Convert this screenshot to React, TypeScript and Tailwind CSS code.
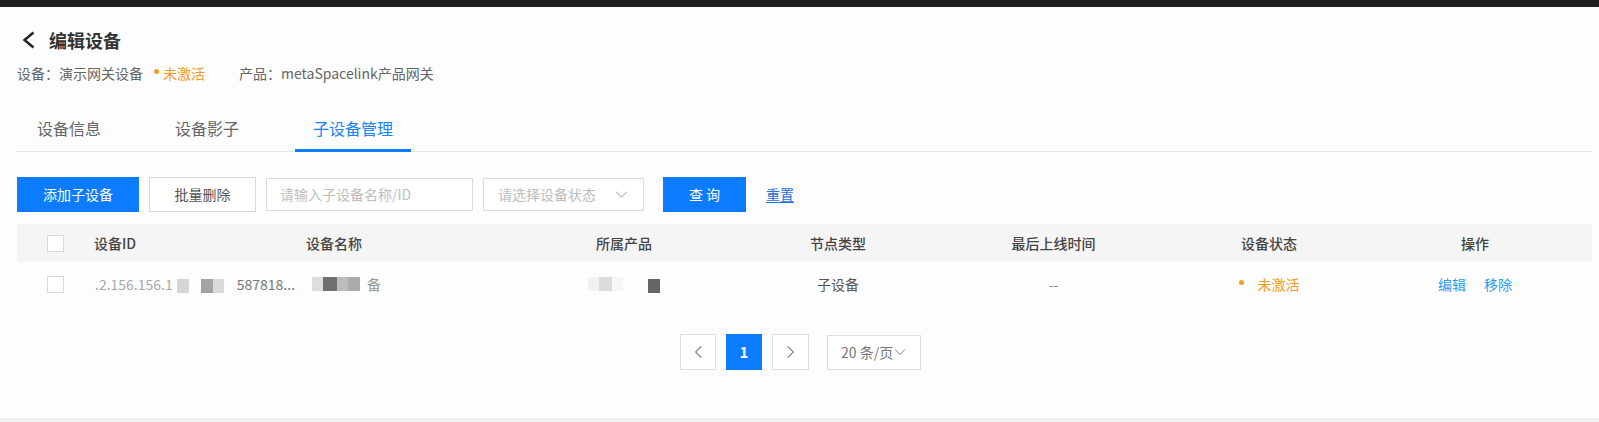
import React from "react";

const FONT = { fontFamily: '"Noto Sans CJK SC", "Noto Sans", sans-serif' };

const TABS = ["设备信息", "设备影子", "子设备管理"];

// column template shared by header and rows
const COLS = "grid grid-cols-[60px_213px_290px_150px_216px_215px_216px_196px_1fr]";

function Chevron({ dir, className }: { dir: "left" | "right" | "down"; className?: string }) {
  const d =
    dir === "left" ? "M9 1 L2 8 L9 15" : dir === "right" ? "M2 1 L9 8 L2 15" : "M1 2 L7 8 L13 2";
  const box = dir === "down" ? "0 0 14 10" : "0 0 11 16";
  return (
    <svg viewBox={box} className={className} fill="none" stroke="currentColor" strokeWidth="1.4">
      <path d={d} />
    </svg>
  );
}

function Checkbox() {
  return <span className="block w-[17px] h-[17px] border border-[#d9d9d9] bg-white" />;
}

function Blot({ w, c }: { w: number; c: string }) {
  return <span className="inline-block h-[14px] align-middle" style={{ width: w, background: c }} />;
}

export default function App() {
  return (
    <div className="min-h-screen bg-[#efefef] text-[#333]" style={FONT}>
      <div className="h-[7px] bg-[#1e1e1e]" />
      <div className="h-[411px] bg-[#fdfdfd] pl-[17px] pr-[7px]">
        {/* Title */}
        <div className="flex items-center pt-[21px] h-[45px]">
          <svg viewBox="0 0 14 18" className="w-[15px] h-[18px] ml-[4px] text-[#222]" fill="none" stroke="currentColor" strokeWidth="2.4">
            <path d="M12 1.5 L3 9 L12 16.5" />
          </svg>
          <h1 className="ml-[13px] text-[18px] font-bold leading-[24px] text-[#333]">编辑设备</h1>
        </div>

        <div className="mt-[11px] flex items-center h-[20px] text-[14px] leading-[20px] text-[#666]">
          <span>设备：演示网关设备</span>
          <span className="ml-[11px] w-[5px] h-[5px] rounded-full bg-[#f59a23] -mt-[3px]" />
          <span className="ml-[4px] text-[#f59a23]">未激活</span>
          <span className="ml-[34px]">产品：metaSpacelink产品网关</span>
        </div>

        {/* Tabs */}
        <div className="mt-[22px] flex gap-[38px] border-b border-[#e6e6e6] pl-[2px]">
          {TABS.map((t, i) => (
            <div
              key={t}
              className={`relative h-[46px] px-[18px] flex items-center text-[16px] ${
                i === 2 ? "text-[#1a82f8]" : "text-[#666]"
              }`}
            >
              {t}
              {i === 2 && <span className="absolute left-0 right-0 bottom-[-1px] h-[3px] bg-[#0b7cff]" />}
            </div>
          ))}
        </div>

        {/* Toolbar */}
        <div className="mt-[25px] flex items-center h-[35px] text-[14px]">
          <button className="w-[122px] h-[35px] bg-[#0b7cff] text-white">添加子设备</button>
          <button className="ml-[10px] w-[107px] h-[35px] border border-[#d9d9d9] bg-white text-[#555]">批量删除</button>
          <div className="ml-[10px] w-[207px] h-[33px] border border-[#dcdcdc] bg-white flex items-center pl-[13px] text-[#bdbdbd]">
            请输入子设备名称/ID
          </div>
          <div className="ml-[10px] w-[161px] h-[33px] border border-[#dcdcdc] bg-white flex items-center justify-between pl-[14px] pr-[15px] text-[#bdbdbd]">
            <span>请选择设备状态</span>
            <Chevron dir="down" className="w-[13px] h-[9px] text-[#c4c4c4]" />
          </div>
          <button className="ml-[19px] w-[83px] h-[35px] bg-[#0b7cff] text-white">查 询</button>
          <a className="ml-[20px] text-[#1f6fe0] underline underline-offset-2">重置</a>
        </div>

        {/* Table */}
        <div className="mt-[12px] text-[14px]">
          <div className={`${COLS} h-[38px] items-center bg-[#f5f5f5] text-[#444] font-medium`}>
            <div className="pl-[30px]"><Checkbox /></div>
            <div className="pl-[17px]">设备ID</div>
            <div className="pl-[16px]">设备名称</div>
            <div className="pl-[16px]">所属产品</div>
            <div className="text-center">节点类型</div>
            <div className="text-center">最后上线时间</div>
            <div className="text-center">设备状态</div>
            <div className="text-center">操作</div>
            <div />
          </div>
          <div className={`${COLS} h-[44px] items-center text-[#555]`}>
            <div className="pl-[30px]"><Checkbox /></div>
            <div className="pl-[18px] flex items-center whitespace-nowrap">
              <span className="text-[#aaa]">.2.156.156.1</span>
              <span className="ml-[4px]"><Blot w={12} c="#d6d6d6" /></span>
              <span className="ml-[12px]"><Blot w={12} c="#a3a3a3" /><Blot w={11} c="#dadada" /></span>
              <span className="ml-[13px] text-[#777]">587818...</span>
            </div>
            <div className="pl-[22px] flex items-center">
              <Blot w={11} c="#dedede" />
              <Blot w={14} c="#707070" />
              <Blot w={11} c="#bdbdbd" />
              <Blot w={12} c="#ababab" />
              <span className="ml-[7px] text-[#999]">备</span>
            </div>
            <div className="pl-[8px] flex items-center">
              <Blot w={11} c="#f1f1f1" />
              <Blot w={13} c="#dcdcdc" />
              <Blot w={11} c="#f6f6f6" />
              <span className="ml-[25px]"><Blot w={12} c="#666" /></span>
            </div>
            <div className="text-center">子设备</div>
            <div className="text-center text-[#888]">--</div>
            <div className="flex items-center justify-center text-[#f59a23]">
              <span className="w-[5px] h-[5px] rounded-full bg-[#f59a23] mr-[14px] -mt-[3px]" />
              未激活
            </div>
            <div className="flex justify-center gap-[18px] text-[#2a9df4]">
              <span>编辑</span>
              <span>移除</span>
            </div>
            <div />
          </div>
        </div>

        {/* Pagination */}
        <div className="mt-[28px] flex justify-center items-center text-[14px] pr-[8px]">
          <div className="w-[36px] h-[36px] border border-[#dedede] bg-white flex items-center justify-center text-[#888]">
            <Chevron dir="left" className="w-[9px] h-[14px]" />
          </div>
          <div className="ml-[10px] w-[36px] h-[36px] bg-[#0b7cff] text-white font-bold text-[15px] flex items-center justify-center">1</div>
          <div className="ml-[10px] w-[37px] h-[36px] border border-[#dedede] bg-white flex items-center justify-center text-[#888]">
            <Chevron dir="right" className="w-[9px] h-[14px]" />
          </div>
          <div className="ml-[18px] w-[94px] h-[35px] border border-[#dedede] bg-white flex items-center pl-[13px] text-[#777]">
            20 条/页
            <Chevron dir="down" className="ml-[1px] w-[12px] h-[8px] text-[#aaa]" />
          </div>
        </div>
      </div>
    </div>
  );
}
